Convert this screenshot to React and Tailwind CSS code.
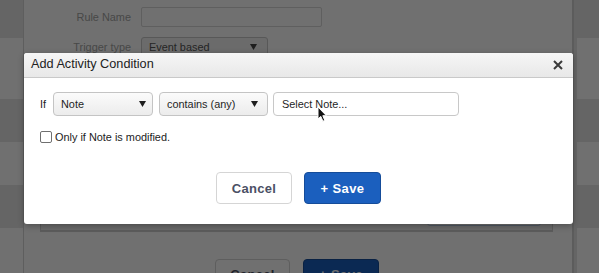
import React from "react";

function Caret({ color = "#1e1e1e" }) {
  return (
    <svg width="7" height="6" viewBox="0 0 7 6" className="shrink-0">
      <polygon points="0,0 7,0 3.5,6" fill={color} />
    </svg>
  );
}

function Select({ label, w, pr }) {
  return (
    <div
      className={`flex h-[24px] items-center justify-between rounded-[4px] border border-[#c4c4c4] bg-gradient-to-b from-[#fbfbfb] to-[#ececec] pl-[7px] text-[10.9px] text-[#1f1f1f] ${w} ${pr}`}
    >
      <span>{label}</span>
      <Caret />
    </div>
  );
}

function Cursor() {
  return (
    <svg
      width="11"
      height="17"
      viewBox="0 0 11 17"
      className="absolute left-[317px] top-[106px]"
    >
      <path
        d="M1 1 L1 13 L3.8 10.4 L5.9 15.2 L7.8 14.4 L5.8 9.7 L9.4 9.7 Z"
        fill="#111"
        stroke="#fff"
        strokeWidth="1"
        strokeLinejoin="round"
      />
    </svg>
  );
}

export default function App() {
  const bands = [
    { h: "h-[38px]", light: false },
    { h: "h-[61px]", light: true },
    { h: "h-[43px]", light: false },
    { h: "h-[43px]", light: true },
    { h: "h-[43px]", light: false },
    { h: "h-[45px]", light: true },
  ];
  return (
    <div className="relative h-[273px] w-[599px] overflow-hidden bg-white font-['Liberation_Sans',Arial,Helvetica,sans-serif]">
      {/* Page behind */}
      <div className="flex h-full w-full">
        {/* left column */}
        <div className="flex w-[24px] shrink-0 flex-col border-r border-[#d6d6d6]">
          {bands.map((b, i) => (
            <div key={i} className={`${b.h} shrink-0 ${b.light ? "bg-white" : "bg-[#e6e6e6]"}`} />
          ))}
        </div>

        {/* main */}
        <div className="flex flex-1 flex-col pt-[7px]">
          <div className="flex h-[20px] shrink-0 items-center">
            <div className="w-[107px] text-right text-[10.9px] text-[#a4a5a4]">Rule Name</div>
            <div className="ml-[10px] h-[20px] w-[181px] rounded-[2px] border border-[#d8d8d8] bg-white" />
          </div>
          <div className="mt-[10px] flex h-[20px] shrink-0 items-center">
            <div className="w-[107px] text-right text-[10.9px] text-[#a4a5a4]">Trigger type</div>
            <div className="ml-[10px] flex h-[20px] w-[127px] items-center justify-between rounded-[3px] border border-[#c8c8c8] bg-[#f3f3f3] pl-[7px] pr-[10px] text-[10.9px] text-[#555]">
              <span>Event based</span>
              <Caret color="#444" />
            </div>
          </div>
          <div className="relative ml-[16px] mt-[8px] h-[167px] w-[513px] shrink-0 border border-b-2 border-[#d2d2d2] bg-[#f2f2f2]">
            <div className="absolute bottom-[4px] left-[386px] h-[20px] w-[114px] rounded-[3px] border border-[#b7c8e2] bg-white" />
          </div>
          <div className="mt-[27px] flex shrink-0 justify-center gap-[13px] pr-[2px]">
            <div className="flex h-[32px] w-[75px] items-center justify-center rounded-[4px] border border-[#d5d5d5] bg-white text-[13px] font-bold tracking-[0.3px] text-[#4b5064]">
              Cancel
            </div>
            <div className="flex h-[32px] w-[76px] items-center justify-center rounded-[4px] border border-[#154c99] bg-[#1b5fbe] text-[13px] font-bold tracking-[0.4px] text-white">
              + Save
            </div>
          </div>
        </div>

        {/* right column */}
        <div className="flex w-[27px] shrink-0 flex-col border-l-2 border-[#d2d2d2]">
          {bands.map((b, i) => (
            <div key={i} className={`${b.h} shrink-0 bg-[#e6e6e6] pl-[3px]`}>
              {b.light && <div className="h-full w-full bg-white" />}
            </div>
          ))}
        </div>
      </div>

      {/* Overlay */}
      <div className="absolute inset-0 bg-[rgba(0,0,0,0.56)]" />

      {/* Dialog */}
      <div className="absolute left-[24px] top-[53px] flex h-[171px] w-[549px] flex-col overflow-hidden rounded-[3px] bg-white shadow-[0_2px_6px_rgba(0,0,0,0.3)]">
        <div className="flex h-[25px] shrink-0 items-center justify-between border-b border-[#c9c9c9] bg-gradient-to-b from-[#f6f6f6] to-[#e8e8e8] pl-[7px] pr-[10px]">
          <span className="text-[12.7px] text-[#222]">Add Activity Condition</span>
          <svg width="10" height="10" viewBox="0 0 10 10">
            <path d="M1 1 L9 9 M9 1 L1 9" stroke="#3a3a3a" strokeWidth="2" strokeLinecap="butt" />
          </svg>
        </div>
        <div className="flex flex-1 flex-col px-[16px] pt-[14px]">
          <div className="flex h-[24px] items-center">
            <span className="w-[13px] text-[10.9px] text-[#222]">If</span>
            <Select label="Note" w="w-[100px]" pr="pr-[6px]" />
            <div className="w-[6px]" />
            <Select label="contains (any)" w="w-[109px]" pr="pr-[9px]" />
            <div className="w-[5px]" />
            <div className="flex h-[24px] w-[186px] items-center rounded-[4px] border border-[#c8c8c8] bg-white pl-[8px] text-[10.9px] text-[#1f1f1f]">
              Select Note...
            </div>
          </div>
          <div className="mt-[13px] flex items-center">
            <div className="h-[12px] w-[12px] rounded-[2px] border border-[#6f6f6f] bg-white" />
            <span className="ml-[3px] text-[10.9px] text-[#222]">Only if Note is modified.</span>
          </div>
          <div className="mt-[27px] flex justify-center gap-[12px]">
            <div className="flex h-[32px] w-[76px] items-center justify-center rounded-[4px] border border-[#d5d5d5] bg-white text-[13px] font-bold tracking-[0.3px] text-[#4b5064]">
              Cancel
            </div>
            <div className="flex h-[32px] w-[77px] items-center justify-center rounded-[4px] border border-[#154c99] bg-[#1b5fbe] text-[13px] font-bold tracking-[0.4px] text-white">
              + Save
            </div>
          </div>
        </div>
      </div>

      <Cursor />
    </div>
  );
}
